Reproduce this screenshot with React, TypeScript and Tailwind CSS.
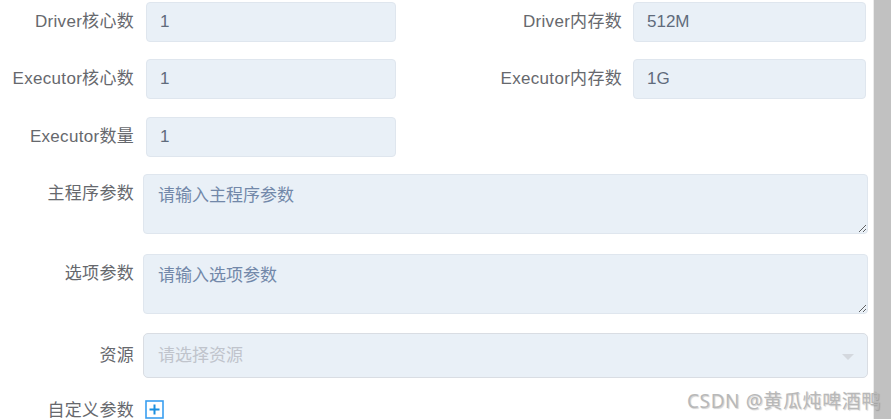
import type { ReactNode } from 'react';

const font = { fontFamily: '"Liberation Sans", "Noto Sans CJK SC", sans-serif' };

function Label({ children, className = '' }: { children: ReactNode; className?: string }) {
    return (
        <div className={`shrink-0 text-right text-[17px] tracking-[0.3px] text-[#66686d] leading-[40px] ${className}`}>
            {children}
        </div>
    );
}

function TextInput({ value, className = '' }: { value: string; className?: string }) {
    return (
        <div
            className={`h-[40px] rounded-[4px] border border-[#dfe6ee] bg-[#e9f0f7] px-[13px] text-[17px] leading-[38px] text-[#606b7c] ${className}`}
        >
            {value}
        </div>
    );
}

export default function App() {
    return (
        <div className="relative flex h-[419px] w-[893px] overflow-hidden bg-white" style={font}>
            <div className="flex-1 pt-[2px]">
                {/* two-column rows */}
                <div className="flex">
                    <div className="flex w-[396px]">
                        <Label className="w-[134px]">Driver核心数</Label>
                        <TextInput value="1" className="ml-[12px] w-[250px]" />
                    </div>
                    <div className="ml-auto mr-[7px] flex">
                        <Label className="w-[180px]">Driver内存数</Label>
                        <TextInput value="512M" className="ml-[11px] w-[233px]" />
                    </div>
                </div>
                <div className="mt-[17px] flex">
                    <div className="flex w-[396px]">
                        <Label className="w-[134px]">Executor核心数</Label>
                        <TextInput value="1" className="ml-[12px] w-[250px]" />
                    </div>
                    <div className="ml-auto mr-[7px] flex">
                        <Label className="w-[180px]">Executor内存数</Label>
                        <TextInput value="1G" className="ml-[11px] w-[233px]" />
                    </div>
                </div>
                <div className="mt-[18px] flex">
                    <div className="flex w-[396px]">
                        <Label className="w-[134px]">Executor数量</Label>
                        <TextInput value="1" className="ml-[12px] w-[250px]" />
                    </div>
                </div>

                {/* full-width rows */}
                <div className="mt-[17px] flex">
                    <Label className="w-[134px]">主程序参数</Label>
                    <textarea
                        placeholder="请输入主程序参数"
                        className="ml-[9px] h-[60px] w-[725px] resize-y rounded-[4px] border border-[#dfe6ee] bg-[#e9f0f7] px-[14px] py-[9px] text-[17px] leading-[24px] text-[#606b7c] placeholder:text-[#7288a9] outline-none"
                        style={font}
                    />
                </div>
                <div className="mt-[20px] flex">
                    <Label className="w-[134px]">选项参数</Label>
                    <textarea
                        placeholder="请输入选项参数"
                        className="ml-[9px] h-[60px] w-[725px] resize-y rounded-[4px] border border-[#dfe6ee] bg-[#e9f0f7] px-[14px] py-[9px] text-[17px] leading-[24px] text-[#606b7c] placeholder:text-[#7288a9] outline-none"
                        style={font}
                    />
                </div>
                <div className="mt-[19px] flex items-center">
                    <Label className="w-[134px]">资源</Label>
                    <div className="relative ml-[9px] flex h-[45px] w-[725px] items-center rounded-[5px] border border-[#d9dde3] bg-[#e9f0f7] px-[14px] text-[17px] text-[#c0c4cc]">
                        请选择资源
                        <span className="absolute right-[13px] top-[20px] h-0 w-0 border-x-[6px] border-t-[6px] border-x-transparent border-t-[#d4d8de]" />
                    </div>
                </div>
                <div className="mt-[13px] flex items-center">
                    <Label className="w-[134px]">自定义参数</Label>
                    <svg className="ml-[11px] mt-[-4px]" width="19" height="19" viewBox="0 0 19 19">
                        <rect x="1" y="1" width="17" height="17" fill="none" stroke="#3a9ff0" strokeWidth="1.6" />
                        <path d="M9.5 4.5v10M4.5 9.5h10" stroke="#1a8fe0" strokeWidth="2" />
                    </svg>
                </div>
            </div>

            {/* scrollbar */}
            <div className="flex h-full w-[20px] shrink-0">
                <div className="w-px bg-[#ebebeb]" />
                <div className="w-[17px] bg-[#c1c1c1]" />
                <div className="w-[2px] bg-white" />
            </div>

            {/* watermark */}
            <div
                className="absolute left-[687px] top-[387px] text-[19px] tracking-[0.6px] text-[#b8b8b8] [text-shadow:1px_1px_1px_rgba(0,0,0,0.18)]"
                style={{ fontFamily: '"Noto Sans", "Noto Sans CJK SC", sans-serif' }}
            >
                CSDN @黄瓜炖啤酒鸭
            </div>
        </div>
    );
}
